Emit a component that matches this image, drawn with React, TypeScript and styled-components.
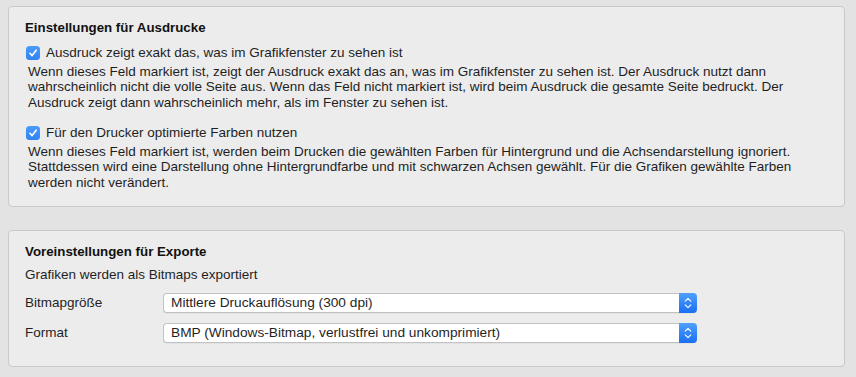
import React from "react";
import styled, { createGlobalStyle } from "styled-components";

const Global = createGlobalStyle`
  html, body { margin: 0; padding: 0; background: #e3e3e3; }
  body { font-family: "Liberation Sans", Arial, sans-serif; font-size: 13.5px; color: #1f1f1f; }
`;

const Page = styled.div`
  display: flex;
  flex-direction: column;
  gap: 23px;
  padding: 6px 11px 10px 8px;
  width: 856px;
  box-sizing: border-box;
`;

const Panel = styled.section`
  background: #ececec;
  border: 1px solid #c9c9c9;
  border-radius: 4px;
  padding: 13px 16px 0 16px;
  display: flex;
  flex-direction: column;
  box-sizing: border-box;
  height: ${(p: { $h: number }) => p.$h}px;
`;

const Heading = styled.h2`
  margin: 0;
  font-size: 13.3px;
  line-height: 16px;
  font-weight: 700;
  color: #111;
`;

const CheckRow = styled.label`
  display: flex;
  align-items: center;
  gap: 6px;
  line-height: 16px;
  margin-top: ${(p: { $mt: number }) => p.$mt}px;
  padding-left: 1px;
  color: #1f1f1f;
`;

const Box = styled.span`
  width: 14px;
  height: 14px;
  border-radius: 3.5px;
  background: linear-gradient(#4b9bfb, #2f83f3);
  display: inline-flex;
  align-items: center;
  justify-content: center;
  flex: none;
`;

const Desc = styled.p`
  margin: 2.5px 0 0 3px;
  line-height: 15.5px;
  color: #1f1f1f;
  white-space: nowrap;
`;

const Plain = styled.p`
  margin: 7px 0 0 0;
  line-height: 16px;
`;

const Grid = styled.div`
  display: grid;
  grid-template-columns: 138px 534px;
  row-gap: 10px;
  align-items: center;
  margin-top: 10px;
`;

const Label = styled.span`
  line-height: 16px;
`;

const Select = styled.div`
  height: 20px;
  box-sizing: border-box;
  display: flex;
  align-items: stretch;
  background: #fff;
  border: 1px solid #c2c2c2;
  border-right: none;
  border-radius: 4px;
  box-shadow: 0 0.5px 0.5px rgba(0, 0, 0, 0.08);
`;

const SelectText = styled.span`
  flex: 1;
  padding-left: 7px;
  line-height: 18px;
  font-size: 13.7px;
  white-space: nowrap;
  overflow: hidden;
`;

const Stepper = styled.span`
  width: 18px;
  margin: -1px 0;
  border-radius: 0 4px 4px 0;
  background: linear-gradient(#4fa0ff, #1b6ff2);
  display: flex;
  align-items: center;
  justify-content: center;
`;

const Check = () => (
  <svg width="10" height="10" viewBox="0 0 10 10">
    <path d="M2 5.3 L4.1 7.6 L8.2 2.2" fill="none" stroke="#fff" strokeWidth="1.6" strokeLinecap="round" strokeLinejoin="round" />
  </svg>
);

const Chevrons = () => (
  <svg width="8" height="14" viewBox="0 0 8 14">
    <path d="M1.2 5.2 L4 2.4 L6.8 5.2" fill="none" stroke="#fff" strokeWidth="1.1" strokeLinecap="round" strokeLinejoin="round" />
    <path d="M1.2 8.8 L4 11.6 L6.8 8.8" fill="none" stroke="#fff" strokeWidth="1.1" strokeLinecap="round" strokeLinejoin="round" />
  </svg>
);

const Dropdown = ({ value }: { value: string }) => (
  <Select>
    <SelectText>{value}</SelectText>
    <Stepper>
      <Chevrons />
    </Stepper>
  </Select>
);

export default function App() {
  return (
    <>
      <Global />
      <Page>
        <Panel $h={201}>
          <Heading>Einstellungen für Ausdrucke</Heading>
          <CheckRow $mt={9}>
            <Box>
              <Check />
            </Box>
            Ausdruck zeigt exakt das, was im Grafikfenster zu sehen ist
          </CheckRow>
          <Desc>
            Wenn dieses Feld markiert ist, zeigt der Ausdruck exakt das an, was im Grafikfenster zu sehen ist. Der Ausdruck nutzt dann
            <br />
            wahrscheinlich nicht die volle Seite aus. Wenn das Feld nicht markiert ist, wird beim Ausdruck die gesamte Seite bedruckt. Der
            <br />
            Ausdruck zeigt dann wahrscheinlich mehr, als im Fenster zu sehen ist.
          </Desc>
          <CheckRow $mt={15}>
            <Box>
              <Check />
            </Box>
            Für den Drucker optimierte Farben nutzen
          </CheckRow>
          <Desc>
            Wenn dieses Feld markiert ist, werden beim Drucken die gewählten Farben für Hintergrund und die Achsendarstellung ignoriert.
            <br />
            Stattdessen wird eine Darstellung ohne Hintergrundfarbe und mit schwarzen Achsen gewählt. Für die Grafiken gewählte Farben
            <br />
            werden nicht verändert.
          </Desc>
        </Panel>
        <Panel $h={137}>
          <Heading>Voreinstellungen für Exporte</Heading>
          <Plain>Grafiken werden als Bitmaps exportiert</Plain>
          <Grid>
            <Label>Bitmapgröße</Label>
            <Dropdown value="Mittlere Druckauflösung (300 dpi)" />
            <Label>Format</Label>
            <Dropdown value="BMP (Windows-Bitmap, verlustfrei und unkomprimiert)" />
          </Grid>
        </Panel>
      </Page>
    </>
  );
}
